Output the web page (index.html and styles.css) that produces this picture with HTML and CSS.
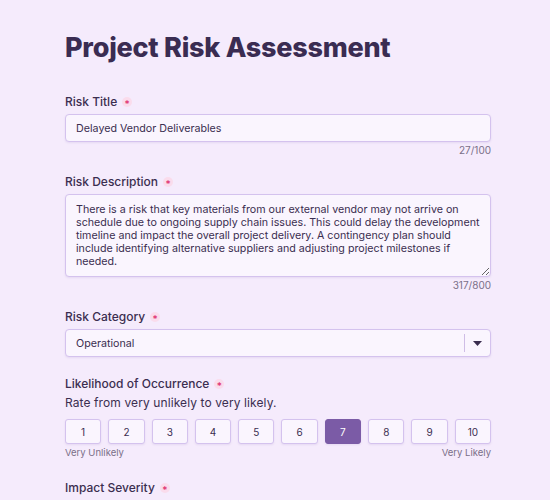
FILE: index.html
```html
<!DOCTYPE html>
<html lang="en">
<head>
<meta charset="utf-8">
<title>Project Risk Assessment</title>
<link rel="stylesheet" href="styles.css">
</head>
<body>
<main class="form">
  <h1 class="title">Project Risk Assessment</h1>

  <div class="field">
    <label class="label">Risk Title <span class="req">*</span></label>
    <input class="input" type="text" value="Delayed Vendor Deliverables">
    <div class="count">27/100</div>
  </div>

  <div class="field">
    <label class="label">Risk Description <span class="req">*</span></label>
    <textarea class="textarea">There is a risk that key materials from our external vendor may not arrive on schedule due to ongoing supply chain issues. This could delay the development timeline and impact the overall project delivery. A contingency plan should include identifying alternative suppliers and adjusting project milestones if needed.</textarea>
    <div class="count">317/800</div>
  </div>

  <div class="field field-select">
    <label class="label">Risk Category <span class="req">*</span></label>
    <div class="select">
      <span class="select-value">Operational</span>
      <span class="select-divider"></span>
      <span class="select-arrow">
        <svg width="9" height="5" viewBox="0 0 9 5"><path d="M0 0 H9 L4.5 5 Z" fill="#3a2d4f"/></svg>
      </span>
    </div>
  </div>

  <div class="field field-scale">
    <label class="label">Likelihood of Occurrence <span class="req">*</span></label>
    <p class="hint">Rate from very unlikely to very likely.</p>
    <div class="scale">
      <button class="step">1</button>
      <button class="step">2</button>
      <button class="step">3</button>
      <button class="step">4</button>
      <button class="step">5</button>
      <button class="step">6</button>
      <button class="step step-active">7</button>
      <button class="step">8</button>
      <button class="step">9</button>
      <button class="step">10</button>
    </div>
    <div class="scale-ends"><span>Very Unlikely</span><span>Very Likely</span></div>
  </div>

  <div class="field">
    <label class="label">Impact Severity <span class="req">*</span></label>
  </div>
</main>
</body>
</html>
```

FILE: styles.css
```css
html, body {
  margin: 0;
  padding: 0;
  background: #f5ebfc;
}
body {
  font-family: Inter, "Noto Sans", sans-serif;
  color: #3b2e50;
}
.form {
  width: 426px;
  padding: 30px 0 0 65px;
  display: flex;
  flex-direction: column;
}
.title {
  margin: 0 0 28px;
  font-size: 27px;
  line-height: 36px;
  font-weight: 800;
  letter-spacing: -0.25px;
  color: #3a2c52;
}
.field {
  display: flex;
  flex-direction: column;
  margin-bottom: 18px;
}
.label {
  font-size: 12px;
  line-height: 16px;
  font-weight: 500;
  color: #3b2e50;
  margin-bottom: 4px;
  display: flex;
  align-items: center;
  gap: 5px;
}
.req {
  display: inline-flex;
  align-items: center;
  justify-content: center;
  width: 10px;
  height: 10px;
  border-radius: 50%;
  background: #fadcec;
  color: #e02e6e;
  font-size: 10px;
  line-height: 10px;
  padding-top: 3px;
  box-sizing: border-box;
}
.input, .textarea, .select {
  box-sizing: border-box;
  width: 426px;
  margin: 0;
  background: #faf5fe;
  border: 1px solid #d4c2ee;
  border-radius: 4px;
  font-family: Inter, "Noto Sans", sans-serif;
  font-size: 10.7px;
  color: #3b2e50;
  box-shadow: 0 1px 2px rgba(120, 90, 170, 0.12);
}
.input {
  height: 28px;
  padding: 0 10px;
  outline: none;
}
.textarea {
  display: block;
  height: 83px;
  padding: 8px 10px 6px;
  line-height: 13px;
  resize: vertical;
  outline: none;
}
.count {
  align-self: flex-end;
  font-size: 10px;
  line-height: 12px;
  color: #7a6f88;
  margin-top: 2px;
}
.select {
  height: 28px;
  display: flex;
  align-items: center;
  padding-left: 10px;
}
.select-value {
  flex: 1;
}
.select-divider {
  width: 1px;
  height: 18px;
  background: #cfbde6;
}
.select-arrow {
  width: 25px;
  display: flex;
  justify-content: center;
  align-items: center;
}
.field-select {
  margin-bottom: 19px;
}
.hint {
  margin: 0 0 9px;
  font-size: 12px;
  line-height: 14px;
  letter-spacing: 0.1px;
  color: #3b2e50;
}
.scale {
  display: flex;
  gap: 7px;
}
.step {
  flex: 1;
  height: 25px;
  padding: 0;
  background: #faf5fe;
  border: 1px solid #d4c2ee;
  border-radius: 3px;
  font-family: Inter, "Noto Sans", sans-serif;
  font-size: 10px;
  color: #3b2e50;
  box-shadow: 0 1px 2px rgba(120, 90, 170, 0.12);
}
.step-active {
  background: #7b5ba6;
  border-color: #7b5ba6;
  color: #ffffff;
}
.scale-ends {
  display: flex;
  justify-content: space-between;
  font-size: 9.5px;
  line-height: 12px;
  color: #7a6f88;
  margin-top: 3px;
}
.field-scale {
  margin-bottom: 21px;
}
```
